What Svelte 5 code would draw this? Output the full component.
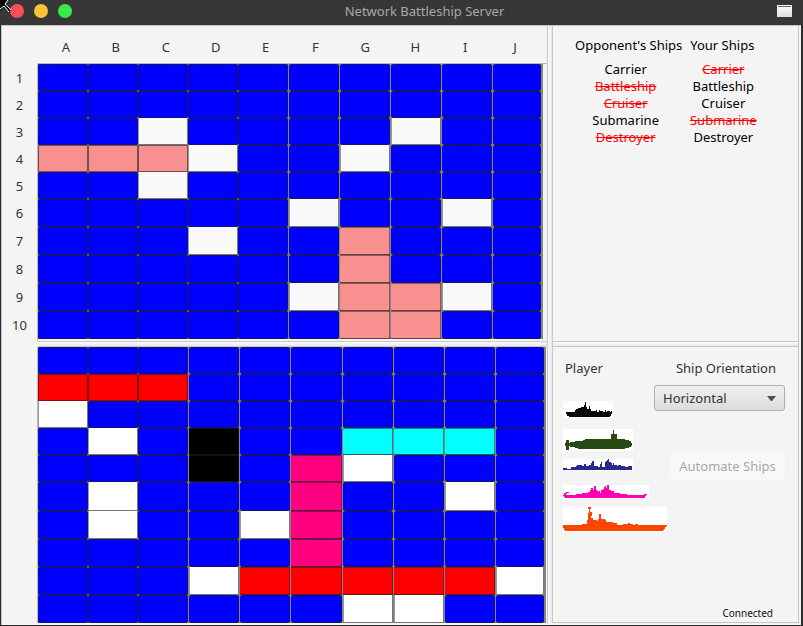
<script>
  const columns = ['A', 'B', 'C', 'D', 'E', 'F', 'G', 'H', 'I', 'J'];

  // . water, o miss, p hit on the enemy, r/k/c/m ship colours
  const shots = [
    '..........',
    '..........',
    '..o....o..',
    'pppo..o...',
    '..o.......',
    '.....o..o.',
    '...o..p...',
    '......p...',
    '.....oppo.',
    '......pp..'
  ];
  const fleet = [
    '..........',
    'rrr.......',
    'w.........',
    '.w.k..ccc.',
    '...k.mw...',
    '.w...m..w.',
    '.w..wm....',
    '.....m....',
    '...wrrrrrw',
    '......ww..'
  ];
  const kinds = { '.': 'water', o: 'miss', p: 'hit', r: 'red', k: 'black', c: 'cyan', m: 'magenta', w: 'white' };

  const ships = [
    { name: 'Carrier', enemySunk: false, ownSunk: true },
    { name: 'Battleship', enemySunk: true, ownSunk: false },
    { name: 'Cruiser', enemySunk: true, ownSunk: false },
    { name: 'Submarine', enemySunk: false, ownSunk: true },
    { name: 'Destroyer', enemySunk: true, ownSunk: false }
  ];

  const silhouettes = [
    { name: 'Destroyer', w: 50, h: 17, gap: 11, color: '#080808',
      d: 'M3 11H12V9H13V8H15V7H18V6H21V4H22V1H23V6H24V8H26V5H27V8H28V10H33V9H34V11H36V9H37V10H40V11H42V9H43V11H44V10H47V11H48V10H49V13H48V15H47V16H6V15H4V13H3Z' },
    { name: 'Submarine', w: 70, h: 22, gap: 8, color: '#284b16',
      d: 'M3 11H6V14H7V13H12V12H20V11H22V10H48V5H50V1H51V5H54V10H62V11H66V12H68V14H69V17H68V18H66V19H62V20H15V19H12V18H7V17H6V21H3V17H2V14H3Z' },
    { name: 'Cruiser', w: 70, h: 12, gap: 14, color: '#29298e',
      d: 'M0 9H4V10H8V8H13V7H14V6H19V7H21V5H23V7H26V6H28V4H29V2H31V7H35V8H37V5H38V3H39V8H42V3H43V2H44V1H45V0H46V3H48V4H49V6H50V4H51V6H54V7H55V6H58V7H62V8H65V7H69V11H0Z' },
    { name: 'Battleship', w: 86, h: 14, gap: 8, color: '#ff00b4',
      d: 'M0 10H1V8H3V7H6V8H4V9H3V10H13V9H19V8H25V7H27V5H28V3H30V5H31V1H33V5H34V6H37V8H38V5H40V4H41V2H42V1H43V3H44V0H46V5H48V6H51V8H57V9H64V10H81V9H84V10H83V11H82V13H2V12H1V11H0Z' },
    { name: 'Carrier', w: 104, h: 25, gap: 0, color: '#ff4500',
      d: 'M25 0H28V2H27V5H29V9H28V11H30V13H34V14H35V12H36V7H38V12H42V13H43V15H50V16H54V18H60V17H65V16H67V17H70V18H72V17H75V18H104V19H103V20H102V22H101V23H100V24H2V23H1V21H0V18H19V17H24V13H25V6H26V2H25Z' }
  ];

  let orientation = $state('Horizontal');
</script>

{#snippet board(rows, kind, label)}
  <div class="board {kind}" role="group" aria-label={label}>
    {#each rows as row, r}
      {#each row.split('') as cell, c}
        <button class="cell {kinds[cell]}" class:lined={c > (kind === 'shots' ? 4 : 2)} aria-label="{columns[c]}{r + 1}"></button>
      {/each}
    {/each}
  </div>
{/snippet}

<div class="window">
  <header>
    <svg class="pointer" width="12" height="13" viewBox="0 0 12 13" aria-hidden="true">
      <path d="M0 0H8L5 4L11 10L9 12L4 7L0 11Z" fill="#000" />
      <path d="M8 0L5 4L11 10M0 9L4 6L9 12" fill="none" stroke="#fff" stroke-width="1" />
    </svg>
    <div class="lights">
      <button class="close" aria-label="Close"></button>
      <button class="minimise" aria-label="Minimise"></button>
      <button class="zoom" aria-label="Zoom"></button>
    </div>
    <h1>Network Battleship Server</h1>
    <svg class="app" width="15" height="12" viewBox="0 0 15 12" aria-hidden="true">
      <defs><linearGradient id="pane" x2="0" y2="1"><stop stop-color="#fff" /><stop offset="1" stop-color="#dcdcd8" /></linearGradient></defs>
      <rect width="15" height="12" fill="url(#pane)" />
      <rect x="1" y="1" width="13" height="1" fill="#3c6eb4" />
    </svg>
  </header>

  <main>
    <section class="target">
      <div class="heads">
        {#each columns as name}<span>{name}</span>{/each}
      </div>
      <div class="numbers">
        {#each columns as _, i}<span>{i + 1}</span>{/each}
      </div>
      {@render board(shots, 'shots', 'Opponent waters')}
    </section>
    <div class="bar left"></div>
    <section class="own">
      {@render board(fleet, 'fleet', 'Your waters')}
    </section>

    <div class="divider"></div>

    <section class="status">
      <table>
        <thead>
          <tr><th>Opponent's Ships</th><th>Your Ships</th></tr>
        </thead>
        <tbody>
          {#each ships as ship}
            <tr>
              <td class:sunk={ship.enemySunk}>{ship.name}</td>
              <td class:sunk={ship.ownSunk}>{ship.name}</td>
            </tr>
          {/each}
        </tbody>
      </table>
    </section>
    <div class="bar right"></div>
    <section class="player">
      <div class="setup">
        <div class="yard">
          <h2>Player</h2>
          {#each silhouettes as s}
            <svg width={s.w} height={s.h} viewBox="0 0 {s.w} {s.h}" style="margin-bottom: {s.gap}px" role="img" aria-label={s.name} shape-rendering="crispEdges">
              <rect width={s.w} height={s.h} fill="#fff" />
              <path d={s.d} fill={s.color} />
            </svg>
          {/each}
        </div>
        <div class="controls">
          <label for="orientation">Ship Orientation</label>
          <div class="picker">
            <select id="orientation" bind:value={orientation}>
              <option>Horizontal</option>
              <option>Vertical</option>
            </select>
            <svg width="9" height="5" viewBox="0 0 9 5" aria-hidden="true"><path d="M0 0H9L5 5H4Z" fill="#505050" /></svg>
          </div>
          <button class="automate" disabled>Automate Ships</button>
        </div>
      </div>
      <p>Connected</p>
    </section>
  </main>
</div>

<style>
  :global(body) {
    margin: 0;
    background: #2b2b2b;
  }
  .window {
    box-sizing: border-box;
    height: 100vh;
    min-height: 480px;
    display: flex;
    flex-direction: column;
    font: 13px/17px 'Noto Sans', sans-serif;
    color: #333;
  }
  button {
    padding: 0;
    border: 0;
    font: inherit;
  }
  header {
    position: relative;
    flex: 0 0 25px;
    height: 25px;
    box-sizing: border-box;
    display: grid;
    grid-template-columns: 72px 1fr 26px;
    align-items: center;
    padding-bottom: 3px;
    background: #373737;
  }
  .pointer {
    position: absolute;
    left: 0;
    top: 0;
    z-index: 1;
  }
  .lights {
    display: flex;
    gap: 10px;
    padding-left: 10px;
  }
  .lights button {
    width: 14px;
    height: 14px;
    flex: none;
    border-radius: 50%;
  }
  .close { background: #f64f57; }
  .minimise { background: #fbc437; }
  .zoom { background: #39ea49; }
  h1 {
    margin: 0;
    text-align: center;
    font-size: 13px;
    font-weight: 400;
    color: #a8a8a8;
  }
  main {
    flex: 1;
    min-height: 0;
    display: grid;
    grid-template-columns: 36px minmax(0, 509fr) 6px minmax(0, 246fr);
    grid-template-rows: minmax(0, 315fr) 6px minmax(0, 276fr);
    margin: 0 2px 1px 1px;
    padding: 0 2px 2px 0;
    border: 1px solid #c3c3c3;
    border-width: 1px 0 0 1px;
    background: #f4f4f4;
  }
  .target {
    grid-area: 1 / 1 / 2 / 3;
    display: grid;
    grid-template-columns: 35px minmax(0, 1fr);
    grid-template-rows: 37px minmax(0, 1fr);
  }
  .heads {
    grid-column: 2;
    display: grid;
    grid-template-columns: repeat(10, minmax(0, 1fr));
    align-items: center;
    padding: 5px 7px 0 4px;
    text-align: center;
  }
  .numbers {
    display: grid;
    grid-template-rows: repeat(6, 27fr) repeat(4, 28fr);
    align-items: center;
    text-align: center;
    padding: 2px 0;
  }
  .target .board {
    border: 1px solid #bbb;
    border-width: 1px 0 0 1px;
    padding: 0 4px 2px 0;
  }
  .own {
    grid-area: 3 / 1 / 4 / 3;
    display: grid;
    padding-left: 35px;
  }
  .own .board {
    border-left: 1px solid #bbb;
    padding-right: 1px;
  }
  .board {
    display: grid;
    min-width: 0;
    min-height: 0;
    background: #858585;
    background-clip: content-box;
  }
  .shots {
    grid-template-columns: repeat(5, 50fr) repeat(5, 51fr);
    grid-template-rows: repeat(6, 27fr) repeat(4, 28fr);
  }
  .fleet {
    grid-template-columns: repeat(3, 50fr) repeat(7, 51fr);
    grid-template-rows: repeat(5, 27fr) repeat(5, 28fr);
  }
  .cell {
    min-width: 0;
    min-height: 0;
    border-radius: 2px;
    box-shadow: inset 0 0 0 1px rgba(32, 32, 32, 0.6);
  }
  .cell:nth-child(10n) {
    margin-right: 2px;
  }
  .lined {
    box-shadow: inset 0 -1px rgba(32, 32, 32, 0.7), inset 0 1px rgba(32, 32, 32, 0.5), inset -1px 0 rgba(32, 32, 32, 0.5);
    margin-left: 1px;
    border-radius: 3px;
  }
  .water { background: #00f; }
  .red { background: #f00; }
  .black { background: #000; }
  .cyan { background: #0ff; }
  .magenta { background: #ff0080; }
  .hit { background: #f99090; }
  .miss { background: #f9f9f9; }
  .white { background: #fff; }
  .red,
  .black,
  .cyan,
  .magenta,
  .hit {
    border-radius: 1px;
  }
  .miss,
  .white {
    border-radius: 0;
    box-shadow: inset -1px -1px #777, inset 1px 0 #999;
  }
  .bar {
    box-sizing: border-box;
    border: 1px solid #c8c8c8;
    border-width: 1px 0;
    background: linear-gradient(#fbfbfb, #e8e8e8);
  }
  .left { grid-area: 2 / 2; }
  .right { grid-area: 2 / 4; border-right: 1px solid #c3c3c3; }
  .divider {
    grid-area: 1 / 3 / 4 / 4;
    border: 1px solid #c8c8c8;
    border-width: 0 1px;
    background: linear-gradient(90deg, #fbfbfb, #e8e8e8);
  }
  .status {
    grid-area: 1 / 4;
    border-right: 1px solid #c3c3c3;
  }
  table {
    margin: 11px 0 0 20px;
    border-collapse: collapse;
    color: #000;
    text-align: center;
  }
  th,
  td {
    height: 17px;
    padding: 0;
    font-weight: 400;
  }
  th {
    padding: 0 2px 7px;
  }
  th + th {
    padding: 0 6px 7px;
  }
  td:first-child {
    padding-right: 6px;
  }
  td + td {
    padding-left: 2px;
  }
  .sunk {
    color: #f00;
    text-decoration: line-through;
  }
  .player {
    grid-area: 3 / 4;
    display: flex;
    flex-direction: column;
    justify-content: space-between;
    border: 1px solid #c3c3c3;
    border-width: 0 1px 1px 0;
  }
  .setup {
    display: flex;
    justify-content: space-between;
    padding: 13px 13px 0 10px;
  }
  .yard {
    flex: 1;
    width: 0;
    min-width: 0;
    display: flex;
    flex-direction: column;
    align-items: flex-start;
  }
  .yard svg {
    flex: none;
  }
  h2 {
    margin: 0 0 24px 2px;
    font-size: 13px;
    font-weight: 400;
  }
  .controls {
    display: flex;
    flex-direction: column;
    align-items: flex-end;
  }
  label {
    margin: 0 9px 8px 0;
  }
  .picker {
    position: relative;
    margin-bottom: 42px;
  }
  .picker svg {
    position: absolute;
    right: 9px;
    top: 11px;
    pointer-events: none;
  }
  select {
    appearance: none;
    display: block;
    box-sizing: border-box;
    width: 131px;
    height: 26px;
    padding: 0 8px;
    border: 1px solid #b0b0b0;
    border-radius: 3px;
    background: linear-gradient(#f0f0f0, #dcdcdc);
    font: inherit;
    color: #333;
  }
  .automate {
    width: 115px;
    height: 27px;
    border-radius: 3px;
    background: #f8f8f8;
    color: #a8a8a8;
  }
  p {
    margin: 0 25px 0 0;
    text-align: right;
    font-size: 10px;
    color: #111;
  }
</style>
